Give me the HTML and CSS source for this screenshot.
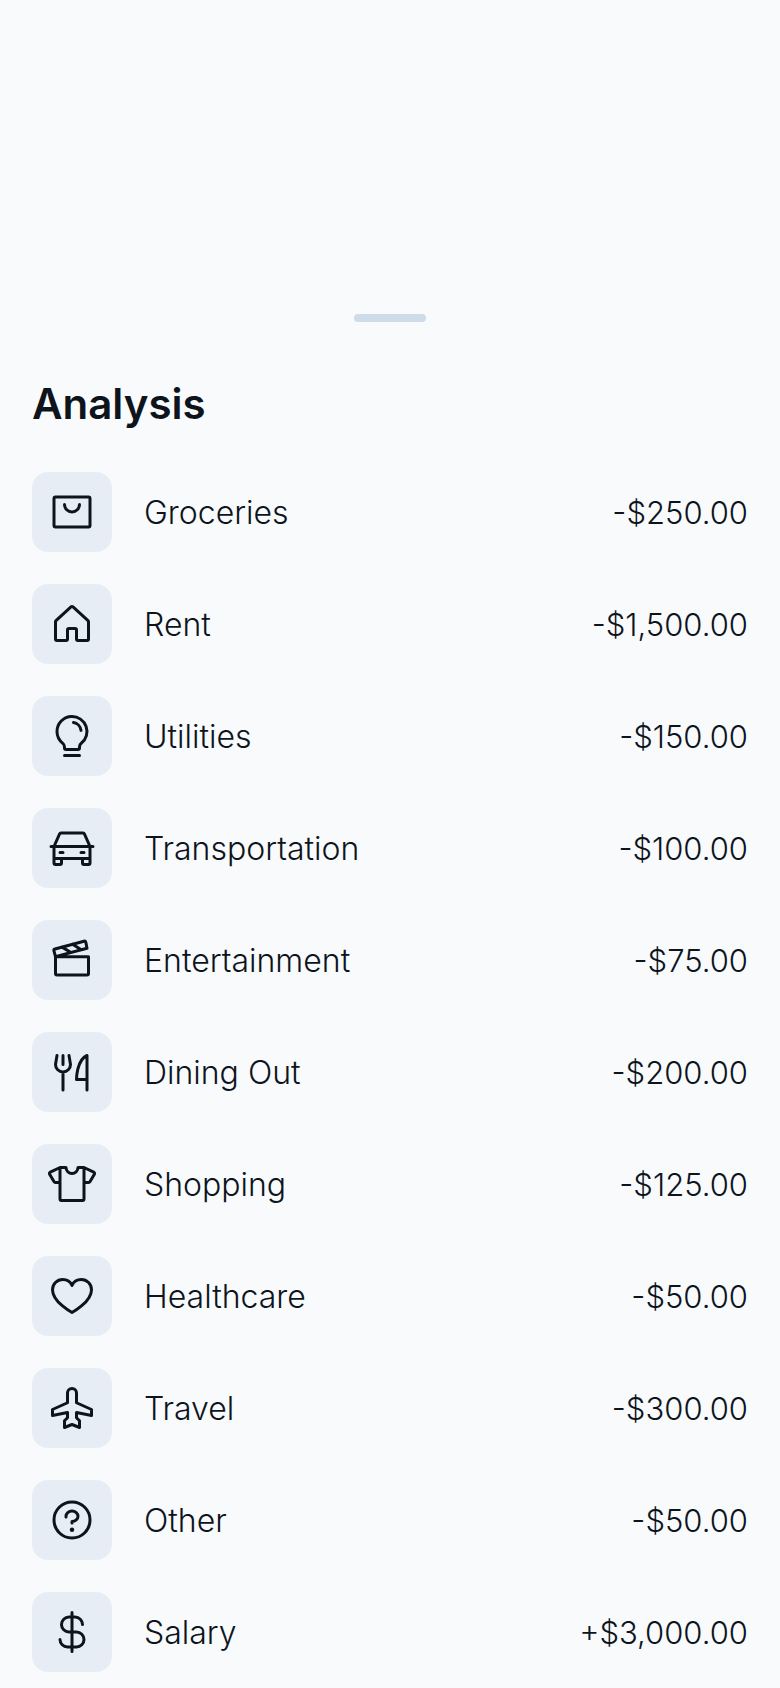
FILE: index.html
```html
<!DOCTYPE html>
<html lang="en">
<head>
<meta charset="utf-8">
<meta name="viewport" content="width=device-width, initial-scale=1">
<title>Analysis</title>
<link rel="stylesheet" href="styles.css">
</head>
<body>
<main class="sheet">
  <div class="handle"></div>
  <h1 class="title">Analysis</h1>
  <ul class="list">
    <li class="row">
      <span class="tile"><svg class="icon" viewBox="0 0 256 256" aria-hidden="true"><rect x="32" y="48" width="192" height="160" rx="8"/><path d="M168,88a40,40,0,0,1-80,0"/></svg></span>
      <span class="name">Groceries</span><span class="amount">-$250.00</span>
    </li>
    <li class="row">
      <span class="tile"><svg class="icon" viewBox="0 0 256 256" aria-hidden="true"><path d="M152,208V160a8,8,0,0,0-8-8H112a8,8,0,0,0-8,8v48a8,8,0,0,1-8,8H48a8,8,0,0,1-8-8V115.5a8.3,8.3,0,0,1,2.6-5.9l80-72.7a8,8,0,0,1,10.8,0l80,72.7a8.3,8.3,0,0,1,2.6,5.9V208a8,8,0,0,1-8,8H160A8,8,0,0,1,152,208Z"/></svg></span>
      <span class="name">Rent</span><span class="amount">-$1,500.00</span>
    </li>
    <li class="row">
      <span class="tile"><svg class="icon" viewBox="0 0 256 256" aria-hidden="true"><path d="M88,232h80M78.7,167A79.9,79.9,0,0,1,48,104.5C47.8,61.1,82.7,25,126.1,24a80,80,0,0,1,51.3,142.9A24.3,24.3,0,0,0,168,186v6a8,8,0,0,1-8,8H96a8,8,0,0,1-8-8v-6A24.4,24.4,0,0,0,78.7,167ZM136,56a48,48,0,0,1,40,42"/></svg></span>
      <span class="name">Utilities</span><span class="amount">-$150.00</span>
    </li>
    <li class="row">
      <span class="tile"><svg class="icon" viewBox="0 0 256 256" aria-hidden="true"><path d="M16,120H240M224,184v24a8,8,0,0,1-8,8H192a8,8,0,0,1-8-8V184M72,184v24a8,8,0,0,1-8,8H40a8,8,0,0,1-8-8V184M64,152H80M176,152h16M224,120,194.1,52.8a8,8,0,0,0-7.3-4.8H69.2a8,8,0,0,0-7.3,4.8L32,120v64H224Z"/></svg></span>
      <span class="name">Transportation</span><span class="amount">-$100.00</span>
    </li>
    <li class="row">
      <span class="tile"><svg class="icon" viewBox="0 0 256 256" aria-hidden="true"><path d="M216,110v90a8,8,0,0,1-8,8H48a8,8,0,0,1-8-8V110ZM40,110l-8.3-30.9a8,8,0,0,1,5.6-9.8l154.6-41.4a8,8,0,0,1,9.8,5.6L208,65ZM75,59.2l47.5,28.6M130.5,44.4,178,73"/></svg></span>
      <span class="name">Entertainment</span><span class="amount">-$75.00</span>
    </li>
    <li class="row">
      <span class="tile"><svg class="icon" viewBox="0 0 256 256" aria-hidden="true"><path d="M80,40V88M80,128v96M208,168H152S152,64,208,40V224M48,40,40,88a40,40,0,0,0,80,0L112,40"/></svg></span>
      <span class="name">Dining Out</span><span class="amount">-$200.00</span>
    </li>
    <li class="row">
      <span class="tile"><svg class="icon" viewBox="0 0 256 256" aria-hidden="true"><path d="M192,120h24.5a8,8,0,0,0,7.2-4.5L247.2,76a8,8,0,0,0-3.6-11L192,40H160a32,32,0,0,1-64,0H64L12.4,65a8,8,0,0,0-3.6,11l23.5,39.5a8,8,0,0,0,7.2,4.5H64M64,40V208a8,8,0,0,0,8,8H184a8,8,0,0,0,8-8V40"/></svg></span>
      <span class="name">Shopping</span><span class="amount">-$125.00</span>
    </li>
    <li class="row">
      <span class="tile"><svg class="icon" viewBox="0 0 256 256" aria-hidden="true"><path d="M128,216S24,160,24,94A54,54,0,0,1,78,40c22.6,0,42,12.3,50,32,8-19.7,27.4-32,50-32a54,54,0,0,1,54,54C232,160,128,216,128,216Z"/></svg></span>
      <span class="name">Healthcare</span><span class="amount">-$50.00</span>
    </li>
    <li class="row">
      <span class="tile"><svg class="icon" viewBox="0 0 256 256" aria-hidden="true"><path d="M152,100V48a24,24,0,0,0-48,0v52L24,136v32l80-16v28L88,196v36l40-16,40,16V196l-16-16V152l80,16V136Z"/></svg></span>
      <span class="name">Travel</span><span class="amount">-$300.00</span>
    </li>
    <li class="row">
      <span class="tile"><svg class="icon" viewBox="0 0 256 256" aria-hidden="true"><circle cx="128" cy="128" r="96"/><path d="M128,144v-8c17.7,0,32-12.5,32-28s-14.3-28-32-28S96,92.5,96,108v4"/><circle class="dot" cx="128" cy="180" r="12"/></svg></span>
      <span class="name">Other</span><span class="amount">-$50.00</span>
    </li>
    <li class="row">
      <span class="tile"><svg class="icon" viewBox="0 0 256 256" aria-hidden="true"><path d="M128,24V232M184,88a40,40,0,0,0-40-40H112a40,40,0,0,0,0,80h40a40,40,0,0,1,0,80H104a40,40,0,0,1-40-40"/></svg></span>
      <span class="name">Salary</span><span class="amount">+$3,000.00</span>
    </li>
  </ul>
</main>
</body>
</html>
```

FILE: styles.css
```css
body {
  margin: 0;
  background: #f8fafc;
  color: #0d141c;
  font-family: Inter, "Liberation Sans", sans-serif;
}

.sheet {
  padding: 314px 32px 16px;
}

.handle {
  width: 72px;
  height: 8px;
  margin: 0 auto;
  border-radius: 4px;
  background: #cedbe8;
}

.title {
  margin: 54px 0 40px;
  font-size: 42px;
  line-height: 56px;
  font-weight: 600;
}

.list {
  display: flex;
  flex-direction: column;
  gap: 32px;
  margin: 0;
  padding: 0;
  list-style: none;
}

.row {
  display: flex;
  align-items: center;
  gap: 32px;
  font-size: 32px;
  line-height: 48px;
  font-weight: 300;
}

.tile {
  display: flex;
  flex: none;
  align-items: center;
  justify-content: center;
  width: 80px;
  height: 80px;
  border-radius: 16px;
  background: #e7edf4;
}

.icon {
  width: 48px;
  height: 48px;
  fill: none;
  stroke: #0d141c;
  stroke-width: 16;
  stroke-linecap: round;
  stroke-linejoin: round;
}

.dot {
  fill: #0d141c;
  stroke: none;
}

.name,
.amount {
  padding-top: 2px;
}

.name {
  flex: 1;
}

.amount {
  font-size: 31px;
}
```
